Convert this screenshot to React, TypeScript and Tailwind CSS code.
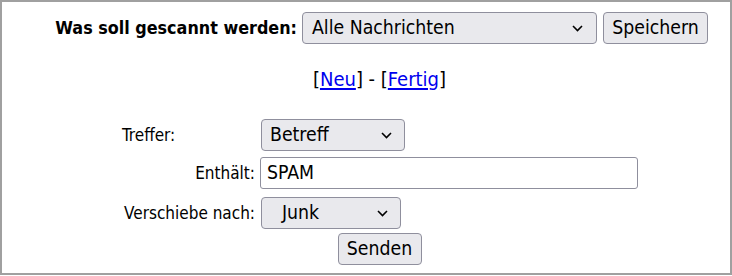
import React from "react";

const font = { fontFamily: '"DejaVu Sans Condensed", "DejaVu Sans", sans-serif' };

function Chevron() {
  return (
    <svg width="11" height="7" viewBox="0 0 11 7">
      <path d="M1 1 L5.5 5.5 L10 1" fill="none" stroke="#000" strokeWidth="1.6" />
    </svg>
  );
}

function FakeSelect({ text, width, textPad, chevronRight }: { text: string; width: string; textPad: string; chevronRight: string }) {
  return (
    <div
      className={`${width} h-[32px] flex items-center justify-between rounded-[4px] border border-[#8f8f9d] bg-[#e9e9ed] text-black text-[19.3px]`}
    >
      <span className={textPad}>{text}</span>
      <span className={chevronRight}>
        <Chevron />
      </span>
    </div>
  );
}

export default function App() {
  return (
    <div className="w-[732px] h-[275px] border-2 border-[#a0a0a0] bg-white text-black text-[17px] leading-none" style={font}>
      <div className="flex items-center mt-[10px] pl-[51px]">
        <div className="w-[244px] flex justify-end whitespace-nowrap font-bold text-[17.8px]">Was soll gescannt werden:</div>
        <div className="ml-[5px]">
          <FakeSelect text="Alle Nachrichten" width="w-[295px]" textPad="pl-[9px]" chevronRight="pr-[13px]" />
        </div>
        <div className="ml-[6px] w-[105px] h-[32px] flex items-center justify-center rounded-[4px] border border-[#8f8f9d] bg-[#e9e9ed] text-[19.3px]">
          Speichern
        </div>
      </div>

      <div className="mt-[23px] h-[24px] flex items-center justify-center pl-[27px] text-[20px]">
        <span>[</span>
        <a href="#" className="text-[#0000ee] underline underline-offset-2">Neu</a>
        <span>]&nbsp;-&nbsp;[</span>
        <a href="#" className="text-[#0000ee] underline underline-offset-2">Fertig</a>
        <span>]</span>
      </div>

      <div className="mt-[28px] grid grid-cols-[139px_auto] pl-[118px] items-center">
        <div className="h-[32px] flex items-center pl-[2px]">Treffer:</div>
        <div className="pl-[2px]">
          <FakeSelect text="Betreff" width="w-[144px]" textPad="pl-[8px]" chevronRight="pr-[12px]" />
        </div>

        <div className="mt-[6px] h-[32px] flex items-center justify-end pr-[4px]">Enthält:</div>
        <div className="mt-[6px] pl-[1px]">
          <div className="w-[378px] h-[32px] flex items-center rounded-[3px] border border-[#8f8f9d] bg-white pl-[6px] text-[19.3px]">
            SPAM
          </div>
        </div>

        <div className="mt-[8px] h-[32px] flex items-center justify-end pr-[4px]">Verschiebe nach:</div>
        <div className="mt-[8px] pl-[2px]">
          <FakeSelect text="Junk" width="w-[140px]" textPad="pl-[20px]" chevronRight="pr-[12px]" />
        </div>
      </div>

      <div className="mt-[4px] flex justify-center pl-[27px]">
        <div className="w-[84px] h-[32px] flex items-center justify-center rounded-[4px] border border-[#8f8f9d] bg-[#e9e9ed] text-[19.3px]">
          Senden
        </div>
      </div>
    </div>
  );
}
